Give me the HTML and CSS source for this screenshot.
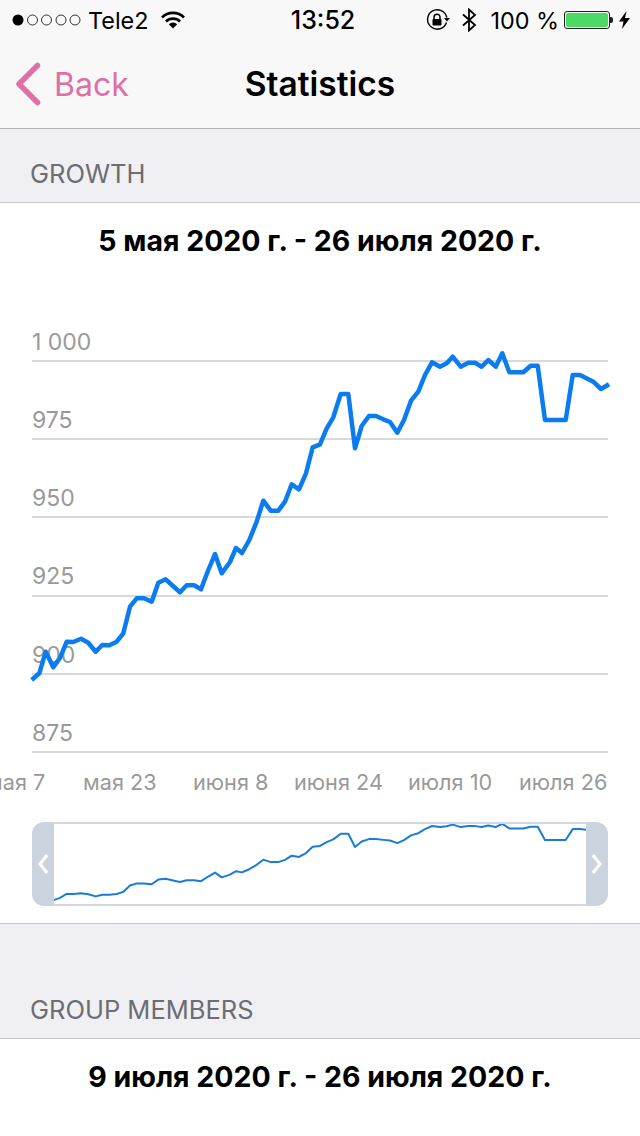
FILE: index.html
```html
<!DOCTYPE html>
<html>
<head>
  <meta name="viewport" content="width=device-width, initial-scale=1.0">
  <title>Statistics</title>
  <link rel="stylesheet" href="styles.css">
</head>
<body>
  <div id="top">
    <div class="status">
      <div class="status-left">
        <svg class="dots" width="70" height="14" viewBox="0 0 70 14">
          <circle cx="6" cy="7" r="5.5" fill="#000"/>
          <g fill="none" stroke="#333" stroke-width="1">
            <circle cx="20.5" cy="7" r="5"/>
            <circle cx="34.5" cy="7" r="5"/>
            <circle cx="49" cy="7" r="5"/>
            <circle cx="63" cy="7" r="5"/>
          </g>
        </svg>
        <span class="carrier">Tele2</span>
        <svg width="24" height="18" viewBox="0 0 24 18">
          <g fill="none" stroke="#000" stroke-width="2.6">
            <path d="M1 6.5a15.5 15.5 0 0 1 22 0"/>
            <path d="M5 10.5a10 10 0 0 1 14 0"/>
          </g>
          <path d="M12 17.5l-4.2-4.2a6 6 0 0 1 8.4 0z" fill="#000"/>
        </svg>
      </div>
      <div class="status-time">13:52</div>
      <div class="status-right">
        <svg width="24" height="24" viewBox="0 0 24 24">
          <path d="M20.5 14.5a9.7 9.7 0 1 1 .3-5" fill="none" stroke="#000" stroke-width="1.4"/>
          <path d="M18 10h6l-3 3.4z" fill="#000"/>
          <path d="M8 11.5v-2.3a3 3 0 0 1 6 0v2.3" fill="none" stroke="#000" stroke-width="1.5"/>
          <rect x="6.5" y="11" width="9" height="6.5" rx="1" fill="#000"/>
        </svg>
        <svg class="bt" width="16" height="24" viewBox="0 0 16 24">
          <path d="M2 6.5l12 10.5-6 5.5V1.500l6 5.500L2 17.500" fill="none" stroke="#000" stroke-width="1.800"/>
        </svg>
        <span class="percent">100 %</span>
        <div class="battery"><div class="battery-fill"></div></div>
        <div class="battery-nib"></div>
        <svg class="bolt" width="11" height="18" viewBox="0 0 11 18">
          <path d="M7.500 0L0 10.500h4.500L3 18l8-11H6z" fill="#000"/>
        </svg>
      </div>
    </div>
    <div class="nav">
      <div class="back">
        <svg width="26" height="44" viewBox="0 0 26 44">
          <path d="M22.500 3.500L4 22l18.500 18.500" fill="none" stroke="#dd70a6" stroke-width="5.500" stroke-linecap="round" stroke-linejoin="round"/>
        </svg>
        <span>Back</span>
      </div>
      <div class="nav-title">Statistics</div>
      <div></div>
    </div>
  </div>

  <div class="section-head growth-head">GROWTH</div>
  <div class="card">
    <div class="date-range">5 мая 2020 г. - 26 июля 2020 г.</div>
    <svg class="chart" width="640" height="480" viewBox="0 320 640 480">
      <g class="grid">
        <line x1="32" x2="608" y1="361" y2="361"/>
        <line x1="32" x2="608" y1="439" y2="439"/>
        <line x1="32" x2="608" y1="517" y2="517"/>
        <line x1="32" x2="608" y1="596" y2="596"/>
        <line x1="32" x2="608" y1="674" y2="674"/>
        <line x1="32" x2="608" y1="752" y2="752"/>
      </g>
      <g class="axis">
        <text x="32" y="350">1 000</text>
        <text x="32" y="428">975</text>
        <text x="32" y="506">950</text>
        <text x="32" y="584">925</text>
        <text x="32" y="663">900</text>
        <text x="32" y="741">875</text>
      </g>
      <g class="axis axis-x">
        <text x="-14" y="790">мая 7</text>
        <text x="83" y="790">мая 23</text>
        <text x="193" y="790">июня 8</text>
        <text x="294" y="790">июня 24</text>
        <text x="408" y="790">июля 10</text>
        <text x="519" y="790">июля 26</text>
      </g>
      <g class="main-line">
        <polyline id="growth-line" class="line" points="31.700,680 39.300,673.300 45.700,651.700 53.300,667.300 60,658 66.700,641.700 73.300,642 81,638.700 88.300,642.700 95.700,651.700 102.300,645 109.300,645.300 116.700,641.700 123.300,633.300 130,606.700 136.700,598.300 144,598.300 151.700,601.700 158.300,582.700 165.700,579.300 173,586 180,592.300 186.700,585.300 194,585.300 201,589.300 208.300,570 215,554 221.700,573.300 230,562 236,548 242,553 249.300,540 256.700,521.700 263.300,500.700 270.700,510.700 278.300,510.700 285,501.700 291.700,484.300 299,489.300 306,473.300 312.700,447.300 320,444.300 326.700,428.300 333.300,417.300 340.700,394 348.300,394 355,448.300 361.700,426 369,416 376,416 383.300,419.300 390,422 397.300,432.700 404,420 411,400.700 418.300,391.700 425,375 432,362.300 440,366.700 446.700,363.300 452.700,356.700 460.700,366.700 468.300,362.700 475,362.700 481.700,366.700 488.300,360 495.700,366.700 502.300,353.300 509.300,372.300 523.300,372.300 530.700,365.700 537.700,365.700 545,420 565.700,420 572.700,375 580,375 593.300,381.700 601,389 609,384.300"/>
      </g>
    </svg>
    <div class="scrubber">
      <div class="handle handle-left">
        <svg width="12" height="22" viewBox="0 0 12 22"><path d="M10 2L3 11l7 9" class="chev"/></svg>
      </div>
      <svg class="mini" viewBox="54 354 532 329" preserveAspectRatio="none">
        <use href="#growth-line" class="mini-line"/>
      </svg>
      <div class="handle handle-right">
        <svg width="12" height="22" viewBox="0 0 12 22"><path d="M2 2l7 9-7 9" class="chev"/></svg>
      </div>
    </div>
  </div>

  <div class="section-head members-head">GROUP MEMBERS</div>
  <div class="card">
    <div class="date-range">9 июля 2020 г. - 26 июля 2020 г.</div>
  </div>
</body>
</html>
```

FILE: styles.css
```css
html, body {
  margin: 0;
  height: 1136px;
  overflow: hidden;
}

body {
  background-color: #efeff4;
  color: #000;
  font-family: Inter, "Noto Sans", sans-serif;
}

#top {
  background-color: #f8f8f8;
  border-bottom: 1px solid #b2b2b8;
  height: 128px;
}

.status {
  display: grid;
  grid-template-columns: 1fr auto 1fr;
  align-items: center;
  height: 40px;
  font-size: 23.400px;
}

.status-left {
  display: flex;
  align-items: center;
  padding-left: 12px;
}

.carrier {
  margin-left: 6px;
  margin-right: 13px;
}

.status-time {
  font-size: 25px;
  font-weight: 500;
  position: relative;
  left: 3px;
}

.status-right {
  display: flex;
  align-items: center;
  justify-content: flex-end;
  padding-right: 10px;
}

.bt {
  margin-left: 11px;
}

.percent {
  margin-left: 13px;
  margin-right: 5px;
}

.battery {
  width: 46px;
  height: 18px;
  box-sizing: border-box;
  border: 1px solid #222;
  border-radius: 3px;
  padding: 1px;
}

.battery-fill {
  height: 100%;
  background-color: #4cd964;
  border-radius: 2px;
}

.battery-nib {
  width: 3px;
  height: 6px;
  background-color: #222;
  border-radius: 0 2px 2px 0;
}

.bolt {
  margin-left: 6px;
}

.nav {
  display: grid;
  grid-template-columns: 1fr auto 1fr;
  align-items: center;
  height: 88px;
}

.back {
  display: flex;
  align-items: center;
  gap: 13px;
  padding-left: 15px;
  color: #dd70a6;
  font-size: 32px;
}

.nav-title {
  font-size: 33.500px;
  font-weight: 600;
}

.section-head {
  padding-left: 30px;
  color: #6d6d72;
  font-size: 25.500px;
  box-sizing: border-box;
  display: flex;
  align-items: flex-end;
  padding-bottom: 14px;
}

.growth-head {
  height: 73px;
  padding-bottom: 13px;
}

.members-head {
  height: 114px;
  padding-bottom: 13px;
}

.card {
  background-color: #fff;
  border-top: 1px solid #c8c7cc;
  border-bottom: 1px solid #c8c7cc;
}

.date-range {
  text-align: center;
  font-size: 28.500px;
  font-weight: 700;
  line-height: 34px;
  padding-top: 21px;
  height: 62px;
  box-sizing: content-box;
}

.card:last-child .date-range {
  height: 80px;
}

.chart {
  display: block;
  margin-top: 34px;
}

.grid line {
  stroke: #d9d9d9;
  stroke-width: 2;
}

.axis text {
  fill: #999;
  font-size: 23px;
}

.axis-x text {
  font-size: 21.700px;
}

.line {
  fill: none;
  stroke-linejoin: round;
  vector-effect: non-scaling-stroke;
}

.main-line {
  stroke: #0a7cf0;
  stroke-width: 4.500;
}

.mini-line {
  stroke: #1a7bdc;
  stroke-width: 2;
}

.scrubber {
  display: flex;
  height: 84px;
  margin: 22px 32px 17px;
}

.mini {
  flex: 1;
  min-width: 0;
  height: 100%;
  box-sizing: border-box;
  border-top: 2px solid #d3d8dd;
  border-bottom: 2px solid #d3d8dd;
  overflow: hidden;
}

.handle {
  width: 22px;
  background-color: #cbd3de;
  display: flex;
  align-items: center;
  justify-content: center;
}

.handle-left {
  border-radius: 12px 0 0 12px;
}

.handle-right {
  border-radius: 0 12px 12px 0;
}

.chev {
  fill: none;
  stroke: #fff;
  stroke-width: 3;
}
```
